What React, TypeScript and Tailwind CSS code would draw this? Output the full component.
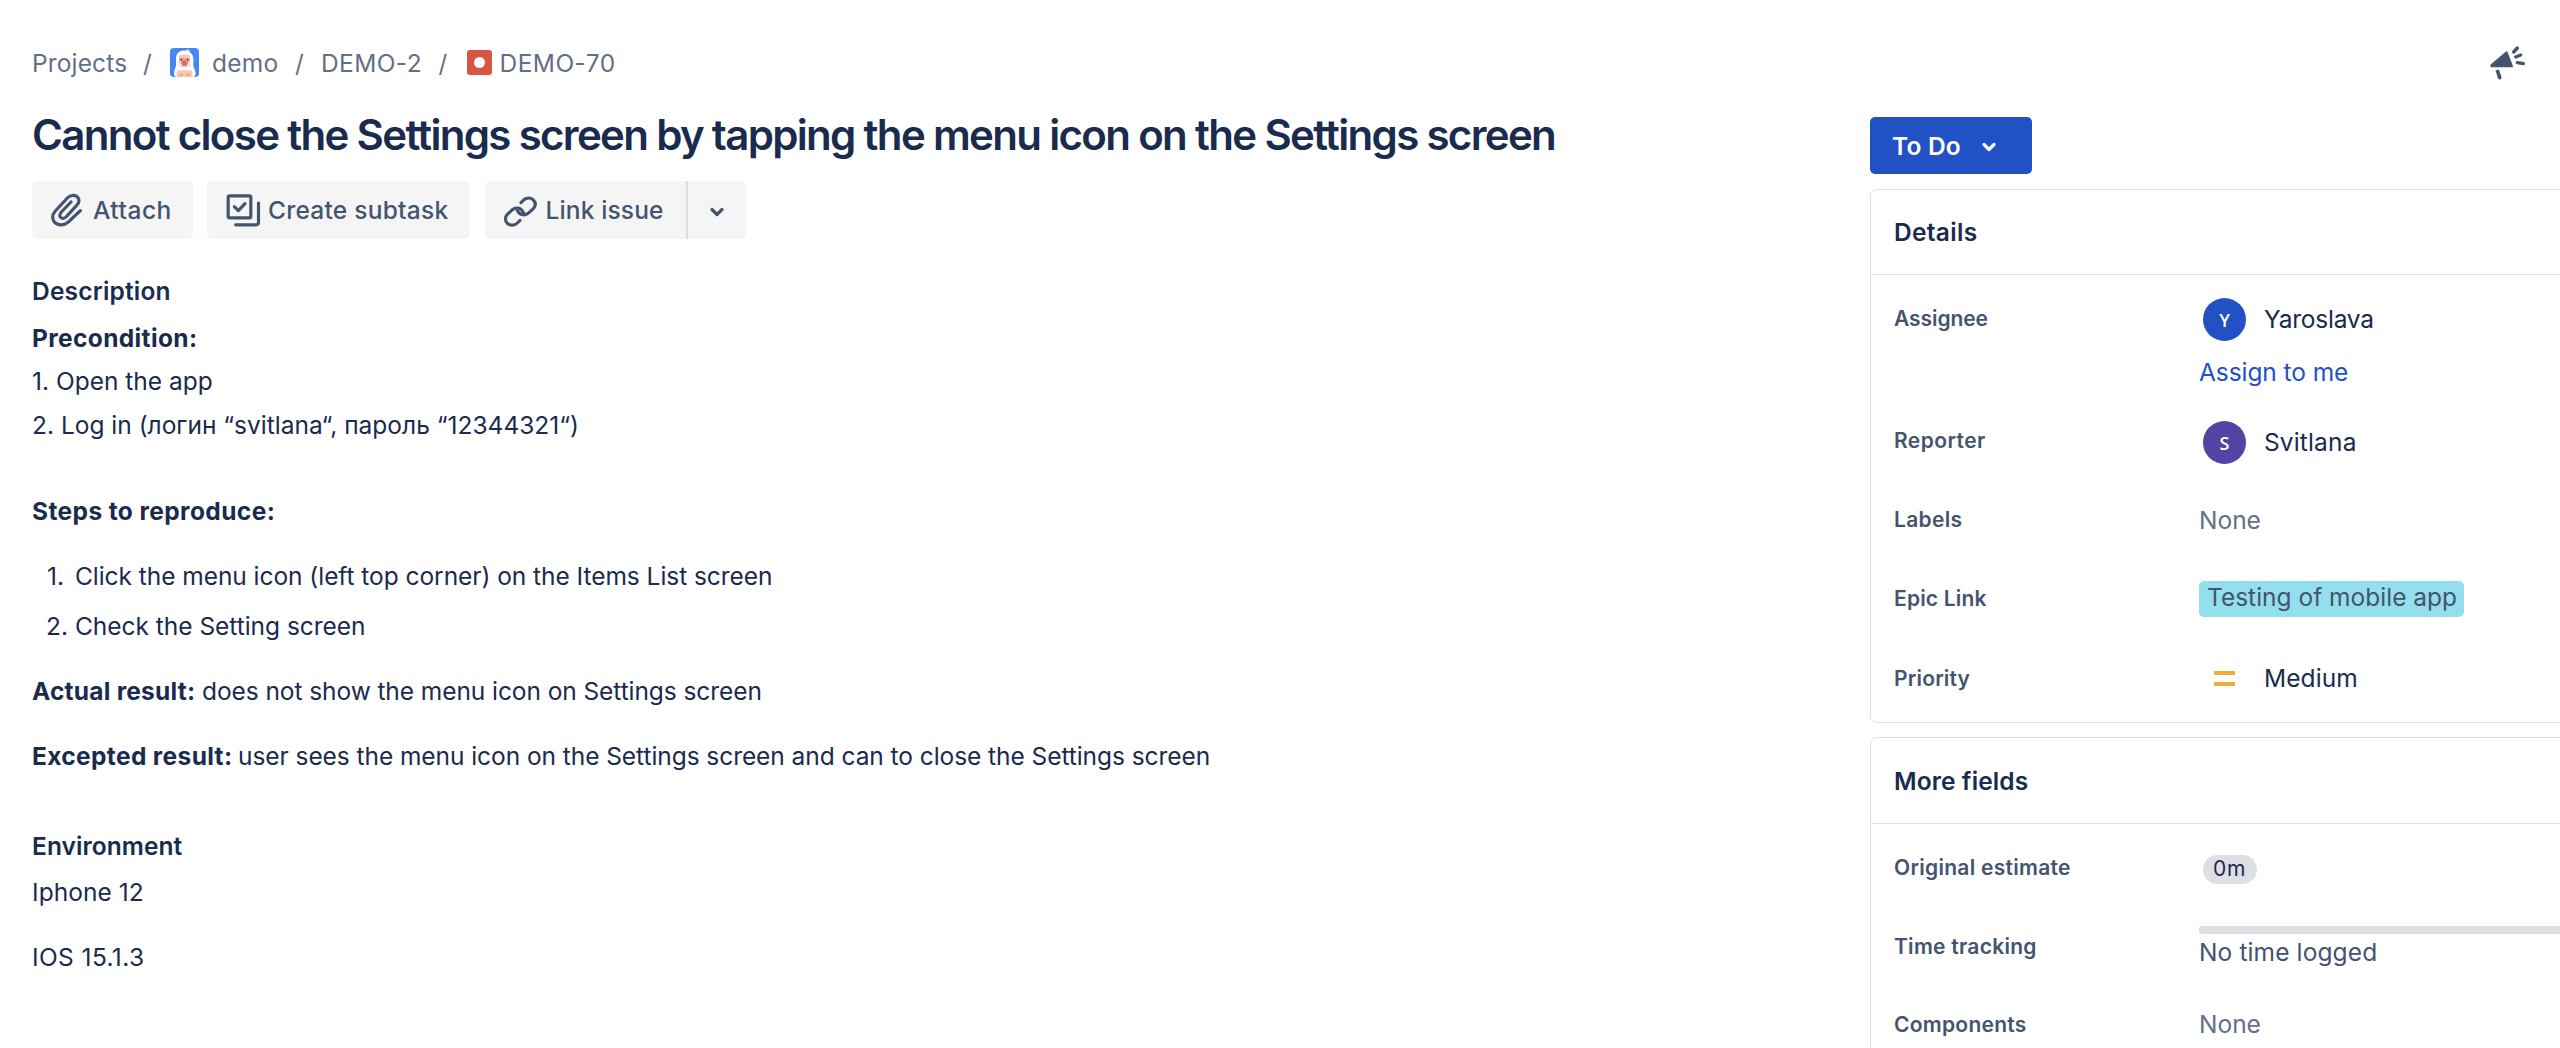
import React from 'react';

function ProjectAvatar() {
  return (
    <svg className="h-[29px] w-[29px] rounded-[4px]" viewBox="0 0 87 87">
      <rect width="87" height="87" fill="#4587f6" />
      <path d="M18 87 L14 84 Q11 78 13 68 L18 54 V30 Q18 16 32 9 Q40 6 46 8 Q52 3 56 3 L54 9 L61 8 L59 13 Q70 20 70 34 V54 L75 66 Q78 78 75 84 L70 87 Z" fill="#fff" />
      <path d="M27 25 Q27 20 33 20 H54 Q60 20 60 25 V47 Q60 56 52 56 H35 Q27 56 27 47 Z" fill="#f9c9b8" />
      <path d="M28 30 Q35 27 43 31 Q51 27 59 30 V40 H28 Z" fill="#f2a08c" />
      <path d="M33 42 Q33 38 43 38 Q54 38 54 42 V50 Q54 55 43 55 Q33 55 33 50 Z" fill="#ee8573" />
      <rect x="31" y="33" width="6" height="4" fill="#4b4a63" />
      <rect x="50" y="33" width="6" height="4" fill="#4b4a63" />
      <rect x="39" y="39" width="8" height="4" fill="#b94c45" />
      <path d="M29 44 H33 V49 H36 V53 L31 51 Z M58 44 H54 V49 H51 V53 L56 51 Z" fill="#fff" />
      <path d="M36 48 H51" stroke="#c9564c" strokeWidth="3" />
      <path d="M20 87 V76 Q20 67 29 67 H58 Q67 67 67 76 V87 Z" fill="#fbc5b4" />
      <circle cx="34" cy="80" r="3" fill="#ee8f7c" />
      <circle cx="53" cy="80" r="3" fill="#ee8f7c" />
    </svg>
  );
}

function BugIcon() {
  return (
    <span className="flex h-[25px] w-[25px] items-center justify-center rounded-[3px] bg-[#d75541]">
      <span className="h-[11px] w-[11px] rounded-full bg-white" />
    </span>
  );
}

function AttachIcon() {
  return (
    <svg className="h-[34px] w-[33px]" viewBox="30 24 99 102" fill="none" stroke="#44546f" strokeWidth="9.5" strokeLinecap="round" strokeLinejoin="round">
      <path d="M121 77 L85 111 C70 124 49 122 41 108 C36 98 39 86 46 78 L82 39 C91 29 107 28 114 38 C119 46 116 55 110 61 L78 96 C72 102 63 101 60 95 C58 90 60 86 64 81 L93 51" />
    </svg>
  );
}

function SubtaskIcon() {
  return (
    <svg className="h-[34px] w-[35px]" viewBox="32 24 105 102" fill="none" stroke="#44546f" strokeWidth="9.5" strokeLinecap="round" strokeLinejoin="round">
      <rect x="38.5" y="32.5" width="68" height="66" rx="5" />
      <path d="M57 65 L69 77 L89 56" />
      <path d="M129.500 54 V112 Q129.500 119.500 122 119.500 H61" />
    </svg>
  );
}

function LinkIcon() {
  return (
    <svg className="h-[34px] w-[35px]" viewBox="40 28 105 102" fill="none" stroke="#44546f" strokeWidth="9.5" strokeLinecap="round" strokeLinejoin="round">
      <path d="M94 51 L102 43 C111 35 125 35 132 44 C139 52 137 62 131 69 L118 81 C107 91 90 90 83 74" />
      <path d="M91 104 L83 112 C75 120 61 121 53 113 C45 105 46 93 53 86 L67 73 C77 64 93 64 101 80" />
    </svg>
  );
}

function Chevron() {
  return (
    <svg className="h-[12px] w-[16px]" viewBox="0 0 16 12" fill="none" stroke="currentColor" strokeWidth="3.2" strokeLinecap="round" strokeLinejoin="round">
      <path d="M3 3.500 L8 8.500 L13 3.500" />
    </svg>
  );
}

function Megaphone() {
  return (
    <svg className="h-[37px] w-[38px]" viewBox="27 14 114 111" fill="none" stroke="#44546f" strokeLinecap="round" strokeLinejoin="round">
      <path d="M34 75 L80 36 L96 78 H35 Z" fill="#44546f" strokeWidth="6" />
      <path d="M51.500 89 L59 111" strokeWidth="11" strokeLinecap="butt" />
      <path d="M58.500 110 L59 112" strokeWidth="11" />
      <path d="M101 35 L112 23" strokeWidth="10" />
      <path d="M107 50 L122 44" strokeWidth="10" />
      <path d="M112 67 L130 70" strokeWidth="10" />
    </svg>
  );
}

function Slash({ className }: { className: string }) {
  return <span className={`${className} shrink-0 text-[#626f86]`}>/</span>;
}

function Field({ label, tracking, height, children }: { label: string; tracking: string; height: string; children: React.ReactNode }) {
  return (
    <div className={`${height} flex shrink-0 items-start pl-[23px]`}>
      <div className={`${tracking} w-[305px] shrink-0 pt-[29px] text-[21px] font-semibold text-[#44546f]`}>{label}</div>
      <div className="min-w-0 flex-1">{children}</div>
    </div>
  );
}

function Person({ initial, name, color, className, tracking }: { initial: string; name: string; color: string; className: string; tracking: string }) {
  return (
    <div className={`${className} flex items-start gap-[18px] pl-1`}>
      <span className={`${color} flex h-[43px] w-[43px] items-center justify-center rounded-full font-['Open_Sans',sans-serif] text-[18px] font-semibold text-white`}>{initial}</span>
      <span className={`${tracking} mt-[6px]`}>{name}</span>
    </div>
  );
}

export default function App() {
  return (
    <div className="flex h-[1048px] w-[2560px] overflow-hidden bg-white font-[Inter,'Liberation_Sans',sans-serif] text-[24.5px] leading-[30px] whitespace-nowrap text-[#1a2b4e]">
      <main className="flex w-[1870px] shrink-0 flex-col pt-[48px] pl-[32px]">
        <nav className="flex h-[30px] items-start text-[#626f86]">
          <span className="w-[111px] tracking-[0.15px]">Projects</span>
          <Slash className="w-[27px]" />
          <ProjectAvatar />
          <span className="ml-[13px] w-[83px] tracking-[0.25px]">demo</span>
          <Slash className="w-[26px]" />
          <span className="w-[117.500px] tracking-[0.4px]">DEMO-2</span>
          <Slash className="w-[28px]" />
          <span className="mt-[2px]"><BugIcon /></span>
          <span className="ml-[8px] tracking-[0.45px]">DEMO-70</span>
        </nav>

        <h1 className="mt-[31px] text-[42px] leading-[51px] font-semibold tracking-[-1.672px]">
          Cannot close the Settings screen by tapping the menu icon on the Settings screen
        </h1>

        <div className="mt-[21px] flex h-[58px] gap-[14.500px] font-medium text-[#44546f]">
          <button className="flex w-[160.500px] items-start rounded-[5px] bg-[#f5f5f6] pt-[12px] pl-[18px]">
            <AttachIcon />
            <span className="mt-[2px] ml-[10px] tracking-[0.52px]">Attach</span>
          </button>
          <button className="flex w-[263px] items-start rounded-[5px] bg-[#f5f5f6] pt-[12px] pl-[18.500px]">
            <SubtaskIcon />
            <span className="mt-[2px] ml-[7.500px] tracking-[0.25px]">Create subtask</span>
          </button>
          <div className="flex w-[261px] overflow-hidden rounded-[5px] bg-[#f5f5f6]">
            <button className="flex w-[203px] items-start border-r-2 border-[#dddfe4] pt-[13.500px] pl-[18px]">
              <LinkIcon />
              <span className="mt-[0.500px] ml-[8px] tracking-[0.134px]">Link issue</span>
            </button>
            <button className="flex flex-1 items-center justify-center pt-[3px]">
              <Chevron />
            </button>
          </div>
        </div>

        <h2 className="mt-[37px] font-semibold tracking-[0.2px]">Description</h2>
        <p className="mt-[17px] font-bold tracking-[0.37px]">Precondition:</p>
        <p className="mt-[13px]">1. Open the app</p>
        <p className="mt-[14px]">2. Log in (логин “svitlana“, пароль “12344321“)</p>
        <p className="mt-[56px] font-bold tracking-[0.4px]">Steps to reproduce:</p>
        <ol className="mt-[35px] flex flex-col gap-[20px]">
          <li className="flex">
            <span className="w-[43px] pl-[15px]">1.</span>
            <span className="tracking-[-0.05px]">Click the menu icon (left top corner) on the Items List screen</span>
          </li>
          <li className="flex">
            <span className="w-[43px] pl-[14px]">2.</span>
            <span className="tracking-[-0.03px]">Check the Setting screen</span>
          </li>
        </ol>
        <p className="mt-[35px] flex">
          <strong className="w-[170px] font-bold tracking-[0.23px]">Actual result:</strong>
          <span className="tracking-[-0.075px]">does not show the menu icon on Settings screen</span>
        </p>
        <p className="mt-[35px] flex">
          <strong className="w-[206px] font-bold tracking-[0.36px]">Excepted result:</strong>
          <span className="tracking-[-0.062px]">user sees the menu icon on the Settings screen and can to close the Settings screen</span>
        </p>
        <h2 className="mt-[60px] font-semibold tracking-[0.07px]">Environment</h2>
        <p className="mt-[16px] tracking-[0.05px]">Iphone 12</p>
        <p className="mt-[35px] tracking-[0.4px]">IOS 15.1.3</p>
      </main>

      <aside className="flex w-[690px] shrink-0 flex-col pt-[45px]">
        <div className="flex h-[72px] shrink-0 justify-end pr-[33px]">
          <Megaphone />
        </div>
        <button className="flex h-[57px] w-[162px] shrink-0 items-start rounded-[5px] bg-[#2151c5] pt-[14px] pl-[22px] font-semibold text-white">
          <span className="w-[88.500px] text-left tracking-[0.2px]">To Do</span>
          <span className="mt-[10px]"><Chevron /></span>
        </button>

        <section className="mt-[15px] h-[534px] w-[720px] shrink-0 rounded-[7px] border border-[#dddfe4]">
          <h2 className="h-[85px] border-b border-[#dddfe4] pt-[27px] pl-[23px] font-semibold tracking-[0.3px]">Details</h2>
          <Field label="Assignee" tracking="tracking-[-0.07px]" height="h-[122px]">
            <Person initial="Y" name="Yaroslava" color="bg-[#2151c5]" className="pt-[23px]" tracking="tracking-[-0.23px]" />
            <a className="mt-[16px] block tracking-[-0.08px] text-[#2151c5]">Assign to me</a>
          </Field>
          <Field label="Reporter" tracking="tracking-[0.43px]" height="h-[79px]">
            <Person initial="S" name="Svitlana" color="bg-[#5243a5]" className="pt-[24px]" tracking="tracking-[0.15px]" />
          </Field>
          <Field label="Labels" tracking="tracking-[0.33px]" height="h-[79px]">
            <div className="pt-[29px] text-[#626f86]">None</div>
          </Field>
          <Field label="Epic Link" tracking="tracking-[0.17px]" height="h-[80px]">
            <div className="pt-[26px]">
              <span className="block h-[36px] w-[265px] rounded-[5px] bg-[#93dfee] pt-px pl-[8px] text-[#44546f]">Testing of mobile app</span>
            </div>
          </Field>
          <Field label="Priority" tracking="tracking-[0.19px]" height="h-[87px]">
            <div className="flex pt-[28px] pl-[15px]">
              <span className="mt-[8px] flex w-[50px] flex-col gap-[7px]">
                <span className="h-[4px] w-[21px] rounded-[1px] bg-[#f4a93c]" />
                <span className="h-[4px] w-[21px] rounded-[1px] bg-[#f4a93c]" />
              </span>
              <span className="tracking-[0.1px]">Medium</span>
            </div>
          </Field>
        </section>

        <section className="mt-[14px] h-[400px] w-[720px] shrink-0 rounded-[7px] border border-[#dddfe4]">
          <h2 className="h-[86px] border-b border-[#dddfe4] pt-[28px] pl-[23px] font-semibold tracking-[0.1px]">More fields</h2>
          <Field label="Original estimate" tracking="tracking-[0.28px]" height="h-[79px]">
            <div className="pt-[31px] pl-1">
              <span className="block h-[29px] w-[54px] rounded-full bg-[#dddfe4] pl-[10px] text-[21px] leading-[28px] tracking-[0.8px]">0m</span>
            </div>
          </Field>
          <Field label="Time tracking" tracking="tracking-[0.26px]" height="h-[78px]">
            <div className="pt-[23px]">
              <div className="h-[8px] rounded-[3px] bg-[#dddfe4]" />
              <div className="mt-[3px] tracking-[0.12px] text-[#44546f]">No time logged</div>
            </div>
          </Field>
          <Field label="Components" tracking="tracking-[0.27px]" height="h-[79px]">
            <div className="pt-[28px] text-[#626f86]">None</div>
          </Field>
        </section>
      </aside>
    </div>
  );
}
